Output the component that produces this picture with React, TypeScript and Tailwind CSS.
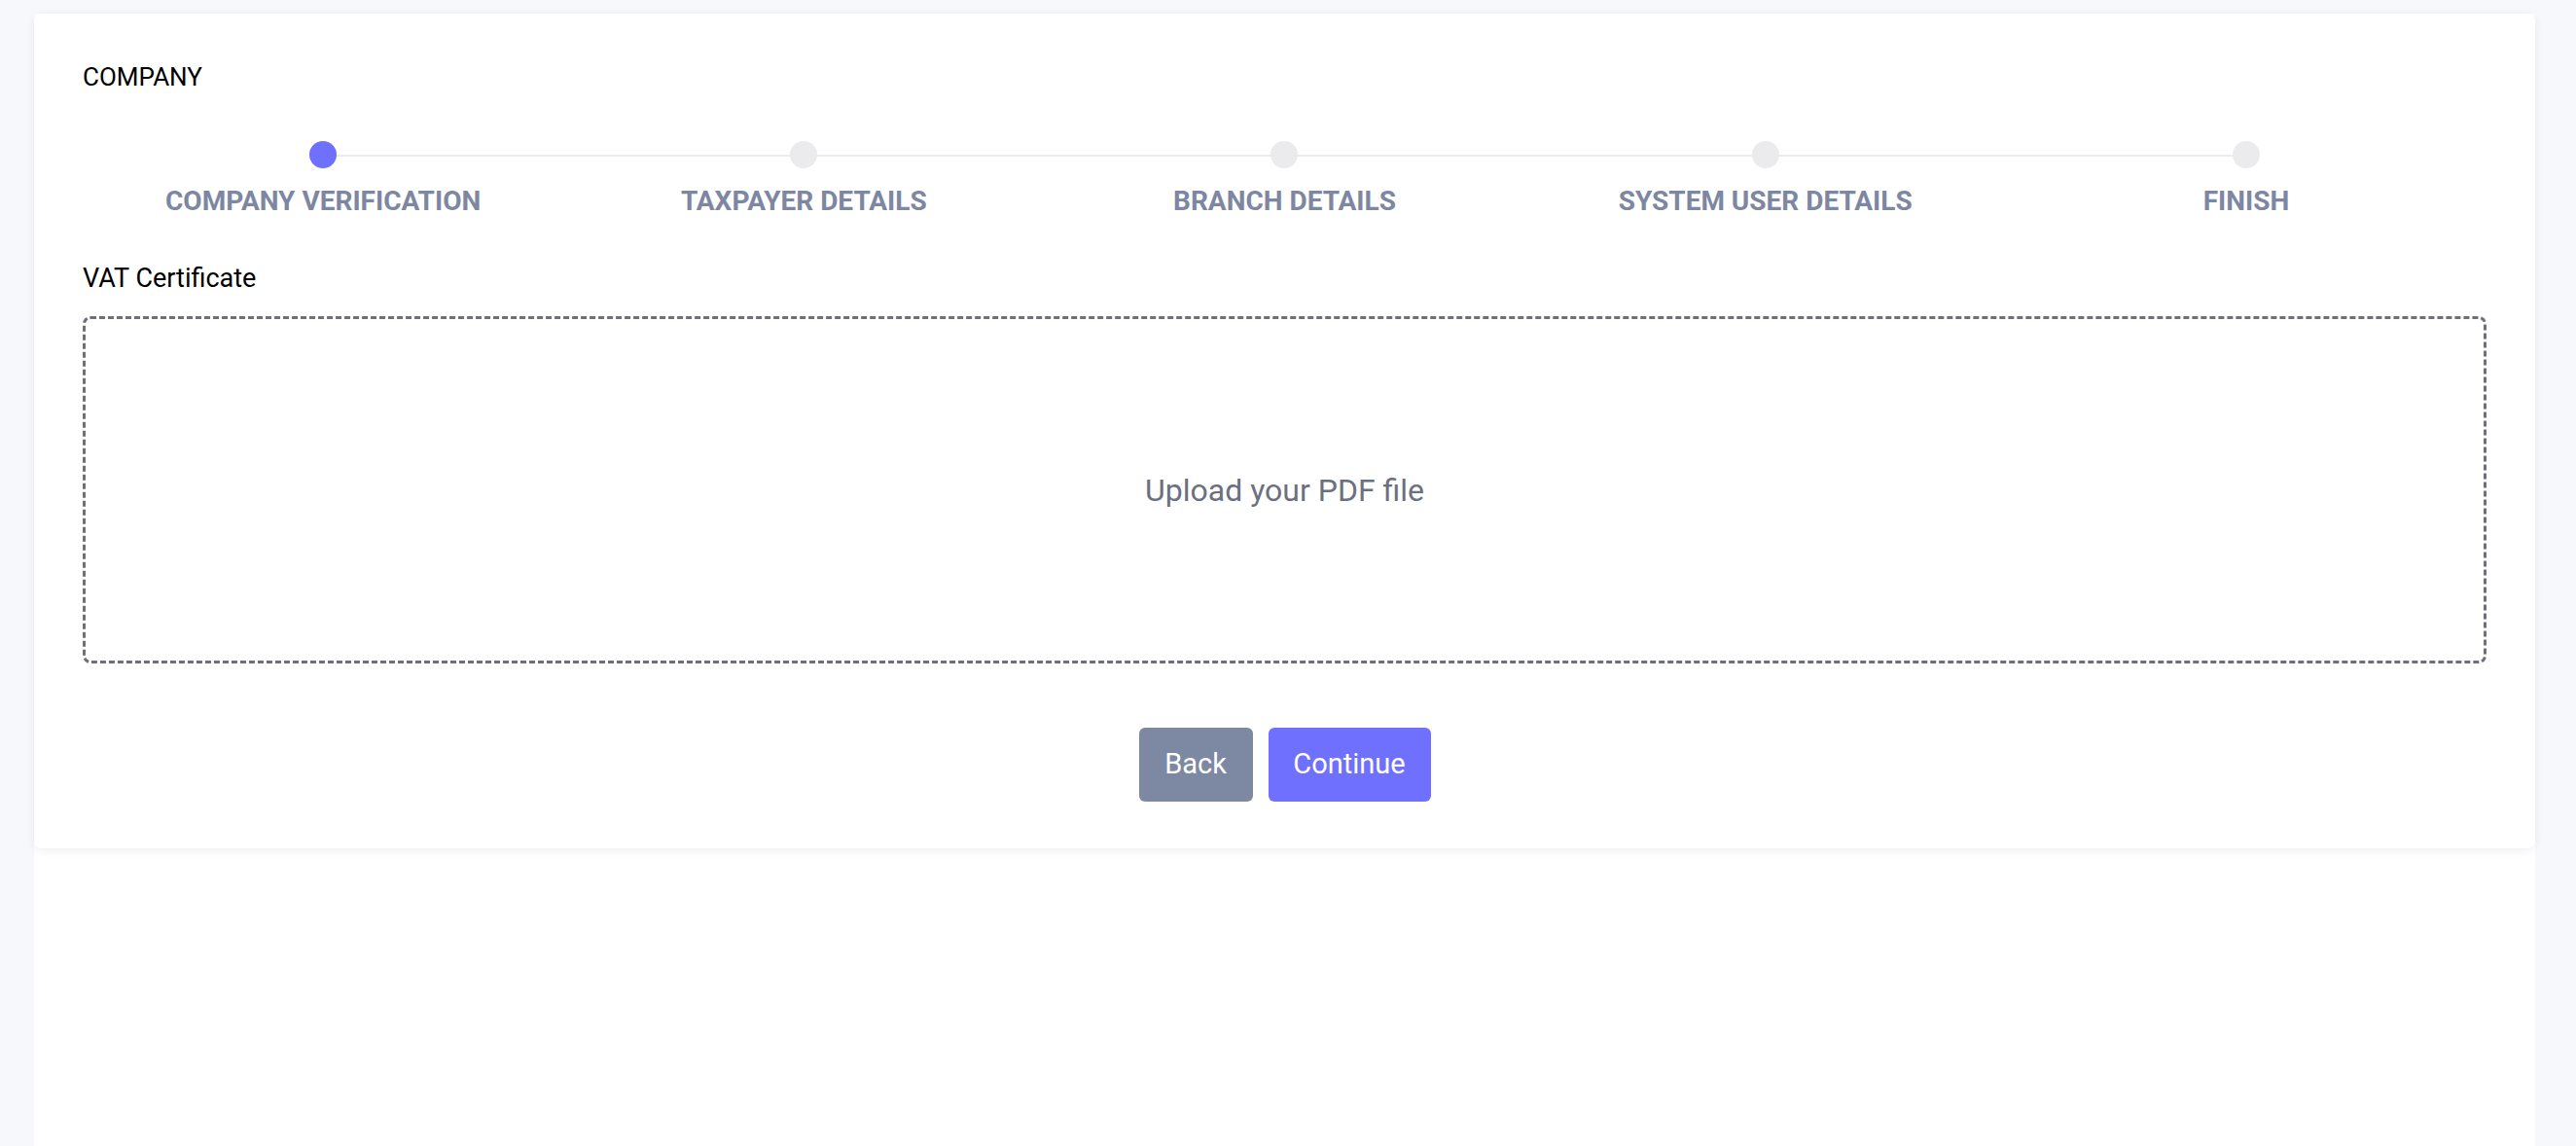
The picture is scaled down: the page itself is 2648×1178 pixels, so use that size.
const steps = [
  "COMPANY VERIFICATION",
  "TAXPAYER DETAILS",
  "BRANCH DETAILS",
  "SYSTEM USER DETAILS",
  "FINISH",
];

export default function App() {
  return (
    <div
      className="min-h-screen bg-[#f7f8fb] pl-[35px] pr-[42px] pt-[14px]"
      style={{ fontFamily: "Roboto, 'Liberation Sans', sans-serif" }}
    >
      <div className="min-h-[1164px] bg-white">
        <div className="rounded-[8px] bg-white px-[50px] pb-[48px] pt-[50px] shadow-[0_2px_10px_rgba(30,40,80,0.08)]">
          <h1 className="text-[26px] leading-[30px] text-black">COMPANY</h1>

          <div className="relative mt-[51px] grid grid-cols-5">
            <div className="absolute left-[10%] right-[10%] top-[14px] h-[2px] bg-[#ececf0]" />
            {steps.map((s, i) => (
              <div key={s} className="relative flex flex-col items-center">
                <div
                  className={
                    i === 0
                      ? "h-[28px] w-[28px] rounded-full bg-[#7070ff]"
                      : "h-[28px] w-[28px] rounded-full bg-[#ebebee]"
                  }
                />
                <div className="mt-[18px] text-[28px] font-bold leading-[32px] text-[#7d87a1]">
                  {s}
                </div>
              </div>
            ))}
          </div>

          <div className="mt-[47px] text-[27px] leading-[32px] text-black">
            VAT Certificate
          </div>

          <div className="mt-[23px] flex h-[357px] items-center justify-center rounded-[8px] border-[3px] border-dashed border-[#6e6e7c]">
            <span className="text-[32px] text-[#6b7081]">Upload your PDF file</span>
          </div>

          <div className="mt-[66px] flex justify-center gap-[16px]">
            <button className="h-[76px] w-[117px] rounded-[6px] bg-[#7d88a2] text-[29px] text-white">
              Back
            </button>
            <button className="h-[76px] w-[167px] rounded-[6px] bg-[#7070ff] text-[29px] text-white">
              Continue
            </button>
          </div>
        </div>
      </div>
    </div>
  );
}
